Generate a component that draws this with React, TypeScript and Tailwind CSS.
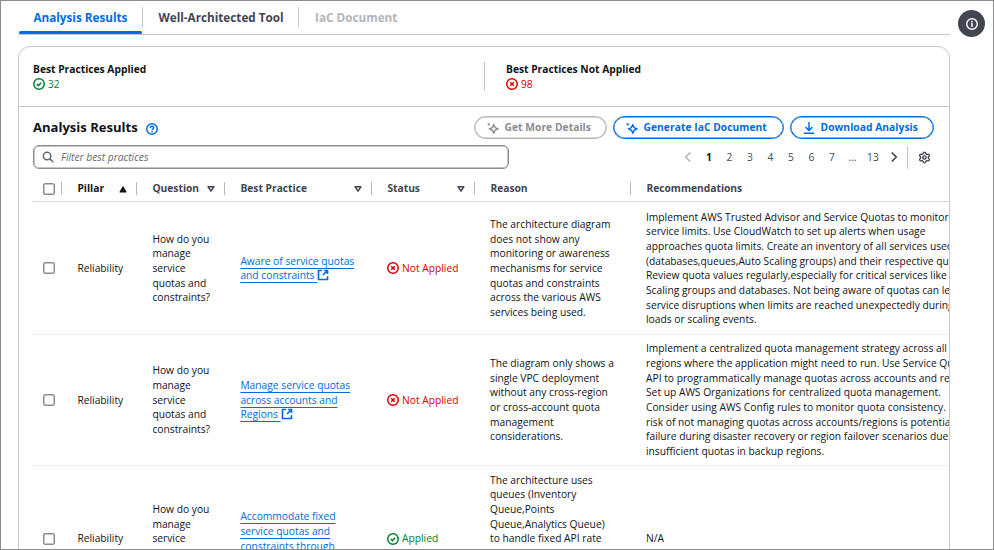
import React from "react";
import { Settings } from "lucide-react";

type IconProps = { className?: string };

function Svg({ className = "", children }: IconProps & { children: React.ReactNode }) {
  return (
    <svg
      viewBox="0 0 16 16"
      fill="none"
      stroke="currentColor"
      strokeWidth="2"
      className={`h-3 w-3 shrink-0 ${className}`}
    >
      {children}
    </svg>
  );
}

const CheckCircle = (p: IconProps) => (
  <Svg {...p}>
    <circle cx="8" cy="8" r="7" />
    <path d="m5 8 2.2 2.2 3.8-3.8" />
  </Svg>
);

const CrossCircle = (p: IconProps) => (
  <Svg {...p}>
    <circle cx="8" cy="8" r="7" />
    <path d="m10.4 5.6-4.8 4.8M5.6 5.6l4.8 4.8" />
  </Svg>
);

const HelpCircle = (p: IconProps) => (
  <Svg {...p}>
    <circle cx="8" cy="8" r="7" />
    <path d="M5.7 6.5C5.7 5 6.7 4.3 8 4.3s2.3.8 2.3 2c0 1.5-2.2 1.6-2.2 3.2M8.1 10.6v1.9" strokeWidth="1.9" />
  </Svg>
);

const InfoCircle = (p: IconProps) => (
  <Svg {...p}>
    <circle cx="8" cy="8" r="7" />
    <path d="M8 12V7M8 6V4M6.8 7.6H8" />
  </Svg>
);

const External = (p: IconProps) => (
  <Svg {...p}>
    <path d="M7 2H2v12h12V9.5M9.5 2H14v4.5M8 8l5.8-5.8" strokeWidth="2.2" />
  </Svg>
);

const Search = (p: IconProps) => (
  <Svg {...p}>
    <circle cx="6.8" cy="6.8" r="5" />
    <path d="m15 15-4.5-4.5" />
  </Svg>
);

const Sparkle = (p: IconProps) => (
  <Svg {...p}>
    <path d="M9 3.4 10.8 7.4 14.8 9.2 10.8 11 9 15 7.2 11 3.2 9.2 7.2 7.4Z" strokeLinejoin="round" strokeWidth="1.9" />
    <path d="M2.4 1.2v3.6M.6 3h3.6" strokeWidth="1.4" />
  </Svg>
);

const Download = (p: IconProps) => (
  <Svg {...p}>
    <path d="M1 15h14M8 0v11M3.5 6.8 8 11.3l4.5-4.5" />
  </Svg>
);

const Angle = ({ flip = false, className = "" }: IconProps & { flip?: boolean }) => (
  <Svg className={className}>
    <path d={flip ? "m5 2 6 6-6 6" : "M11 2 5 8l6 6"} strokeWidth="2.2" />
  </Svg>
);

const Caret = ({ up = false, className = "" }: IconProps & { up?: boolean }) => (
  <Svg className={className}>
    {up ? (
      <path d="M4 12 8 5l4 7Z" fill="currentColor" strokeLinejoin="round" strokeWidth="1.4" />
    ) : (
      <path d="M4.2 5h7.6L8 10.8Z" strokeLinejoin="round" />
    )}
  </Svg>
);

const Checkbox = () => (
  <span className="block h-3 w-3 rounded-[2px] border border-[#8c8c94] bg-white shadow-[inset_0_0_0_0.5px_#8c8c94]" />
);

type Column = { name: string; sort?: "up" | "down"; last?: boolean };

const columns: Column[] = [
  { name: "Pillar", sort: "up" },
  { name: "Question", sort: "down" },
  { name: "Best Practice", sort: "down" },
  { name: "Status", sort: "down" },
  { name: "Reason" },
  { name: "Recommendations", last: true },
];

type Row = {
  question: string;
  practice: string;
  applied: boolean;
  reason: string;
  recommendation: string;
};

const question = "How do you\nmanage\nservice\nquotas and\nconstraints?";

const rows: Row[] = [
  {
    question,
    practice: "Aware of service quotas\nand constraints ",
    applied: false,
    reason:
      "The architecture diagram\ndoes not show any\nmonitoring or awareness\nmechanisms for service\nquotas and constraints\nacross the various AWS\nservices being used.",
    recommendation:
      "Implement AWS Trusted Advisor and Service Quotas to monitor\nservice limits. Use CloudWatch to set up alerts when usage\napproaches quota limits. Create an inventory of all services used\n(databases,queues,Auto Scaling groups) and their respective quotas.\nReview quota values regularly,especially for critical services like Auto\nScaling groups and databases. Not being aware of quotas can lead to\nservice disruptions when limits are reached unexpectedly during peak\nloads or scaling events.",
  },
  {
    question,
    practice: "Manage service quotas\nacross accounts and\nRegions ",
    applied: false,
    reason:
      "The diagram only shows a\nsingle VPC deployment\nwithout any cross-region\nor cross-account quota\nmanagement\nconsiderations.",
    recommendation:
      "Implement a centralized quota management strategy across all\nregions where the application might need to run. Use Service Quotas\nAPI to programmatically manage quotas across accounts and regions.\nSet up AWS Organizations for centralized quota management.\nConsider using AWS Config rules to monitor quota consistency.  The\nrisk of not managing quotas across accounts/regions is potential\nfailure during disaster recovery or region failover scenarios due to\ninsufficient quotas in backup regions.",
  },
  {
    question,
    practice: "Accommodate fixed\nservice quotas and\nconstraints through\narchitecture ",
    applied: true,
    reason:
      "The architecture uses\nqueues (Inventory\nQueue,Points\nQueue,Analytics Queue)\nto handle fixed API rate\nlimits and to decouple\ncomponents from fixed\nservice quotas and\nconstraints.",
    recommendation: "N/A",
  },
];

const gridCols = "grid grid-cols-[29px_75px_88px_147px_103px_156px_420px]";

function PillButton({ disabled = false, width, icon, label }: { disabled?: boolean; width: string; icon: React.ReactNode; label: string }) {
  return (
    <button
      className={`flex h-[23.5px] items-center rounded-full border pl-[12px] font-bold tracking-[0.05px] whitespace-nowrap ${width} ${
        disabled
          ? "border-[#b4b4bb] text-[#8c8c94] shadow-[inset_0_0_0_0.5px_#b4b4bb]"
          : "border-[#006ce0] text-[#006ce0] shadow-[inset_0_0_0_0.5px_#006ce0]"
      }`}
    >
      {icon}
      <span className="ml-[6px]">{label}</span>
    </button>
  );
}

export default function App() {
  return (
    <div className="h-[550px] w-[994px] overflow-hidden border border-[#8c8c8c] bg-white font-['Open_Sans','Noto_Sans',sans-serif] text-[10.25px] leading-[14.65px] text-[#0f141a]">
      <div className="flex">
        <main className="ml-[17px] w-[932px] shrink-0">
          <nav className="flex h-[34px] items-start border-b border-[#c6c6cd] text-[11.72px] font-bold">
            <div className="flex h-[33px] w-[125px] flex-col justify-between text-[#006ce0]">
              <div className="mt-[6px] flex h-5 items-center border-r border-[#c6c6cd] pl-[15.4px]">Analysis Results</div>
              <div className="mr-[1px] ml-px h-[3px] rounded-[2px] bg-[#006ce0]" />
            </div>
            <div className="mt-[6px] flex h-5 w-[156px] items-center border-r border-[#c6c6cd] pl-[15.4px] text-[#424650]">
              Well-Architected Tool
            </div>
            <div className="mt-[6px] flex h-5 items-center pl-4 text-[#b4b4bb]">IaC Document</div>
          </nav>

          <section className="mt-[11px] h-[560px] overflow-hidden rounded-t-[12px] border border-[#c6c6cd]">
            <div className="flex h-[60px] border-b border-[#c6c6cd] pt-[15px]">
              <div className="h-[29px] w-[466px] border-r border-[#c6c6cd] pl-[14px]">
                <div className="font-bold">Best Practices Applied</div>
                <div className="flex items-center gap-[3px] text-[#00802f]">
                  <CheckCircle />
                  32
                </div>
              </div>
              <div className="pl-[21px]">
                <div className="font-bold">Best Practices Not Applied</div>
                <div className="flex items-center gap-[3px] text-[#db0000]">
                  <CrossCircle />
                  98
                </div>
              </div>
            </div>

            <div className="pl-[14px]">
              <div className="flex h-[38px] items-center pt-[3px] pr-[15px]">
                <h2 className="text-[13.05px] font-bold">Analysis Results</h2>
                <HelpCircle className="mt-[2px] ml-[8.2px] text-[#006ce0]" />
                <div className="ml-auto flex gap-[6px]">
                  <PillButton disabled width="w-[133px]" icon={<Sparkle />} label="Get More Details" />
                  <PillButton width="w-[171px]" icon={<Sparkle />} label="Generate IaC Document" />
                  <PillButton width="w-[144.5px]" icon={<Download />} label="Download Analysis" />
                </div>
              </div>

              <div className="flex h-[24px] items-center">
                <div className="flex h-[23.5px] w-[475.5px] items-center rounded-[6px] border border-[#8c8c94] pl-[8px] text-[#656871] shadow-[inset_0_0_0_0.5px_#8c8c94]">
                  <Search />
                  <span className="ml-[7px] italic">Filter best practices</span>
                </div>
                <div className="ml-[173.5px] flex items-center text-[#424650]">
                  <Angle className="text-[#b4b4bb]" />
                  <div className="ml-[4.7px] flex">
                    {["1", "2", "3", "4", "5", "6", "7", "..."].map((n, i) => (
                      <span key={n} className={`w-[20.5px] text-center ${i === 0 ? "font-bold text-[#0f141a]" : ""}`}>
                        {n}
                      </span>
                    ))}
                    <span className="w-[20.5px] text-center">13</span>
                  </div>
                  <Angle flip className="ml-[4.7px]" />
                </div>
                <div className="ml-[7.5px] h-[23px] border-l border-[#c6c6cd]" />
                <Settings className="ml-[10px] h-[13px] w-[13px] text-[#424650]" strokeWidth={2.6} />
              </div>

              <div className={`mt-[8.5px] h-[24px] w-[1018px] items-center border-b border-[#d9d9df] pb-[1px] ${gridCols}`}>
                <div className="flex h-[13px] items-center border-r border-[#b9b9c2] pl-[10px]">
                  <Checkbox />
                </div>
                {columns.map((c) => (
                  <div
                    key={c.name}
                    className={`flex h-[13px] items-center justify-between pr-[7.3px] pl-[15.4px] font-bold ${
                      c.last ? "" : "border-r border-[#b9b9c2]"
                    } ${c.sort === "up" ? "text-[#0f141a]" : "text-[#424650]"}`}
                  >
                    {c.name}
                    {c.sort && <Caret up={c.sort === "up"} />}
                  </div>
                ))}
              </div>

              <div className="pt-[1.7px]">
                {rows.map((r, i) => (
                  <div key={i} className={`w-[1018px] items-center border-b border-[#ebebf0] py-[6.6px] ${gridCols}`}>
                    <div className="pl-[10px]">
                      <Checkbox />
                    </div>
                    <div className="pl-[15.4px]">Reliability</div>
                    <div className="pl-[15.4px] whitespace-pre">{r.question}</div>
                    <div className="pl-[15.4px] whitespace-pre text-[#006ce0]">
                      <span className="underline decoration-1 underline-offset-[3px]">{r.practice}</span>
                      <External className="inline-block align-[-2px]" />
                    </div>
                    <div className={`flex items-center gap-[3px] pl-[15px] ${r.applied ? "text-[#00802f]" : "text-[#db0000]"}`}>
                      {r.applied ? <CheckCircle /> : <CrossCircle />}
                      {r.applied ? "Applied" : "Not Applied"}
                    </div>
                    <div className="pl-[15px] whitespace-pre">{r.reason}</div>
                    <div className="pl-[15px] whitespace-pre">{r.recommendation}</div>
                  </div>
                ))}
              </div>
            </div>
          </section>
        </main>

        <button className="mt-[9px] ml-[8px] flex h-[27px] w-[27px] shrink-0 items-center justify-center rounded-full bg-[#424650] text-white">
          <InfoCircle />
        </button>
      </div>
    </div>
  );
}
